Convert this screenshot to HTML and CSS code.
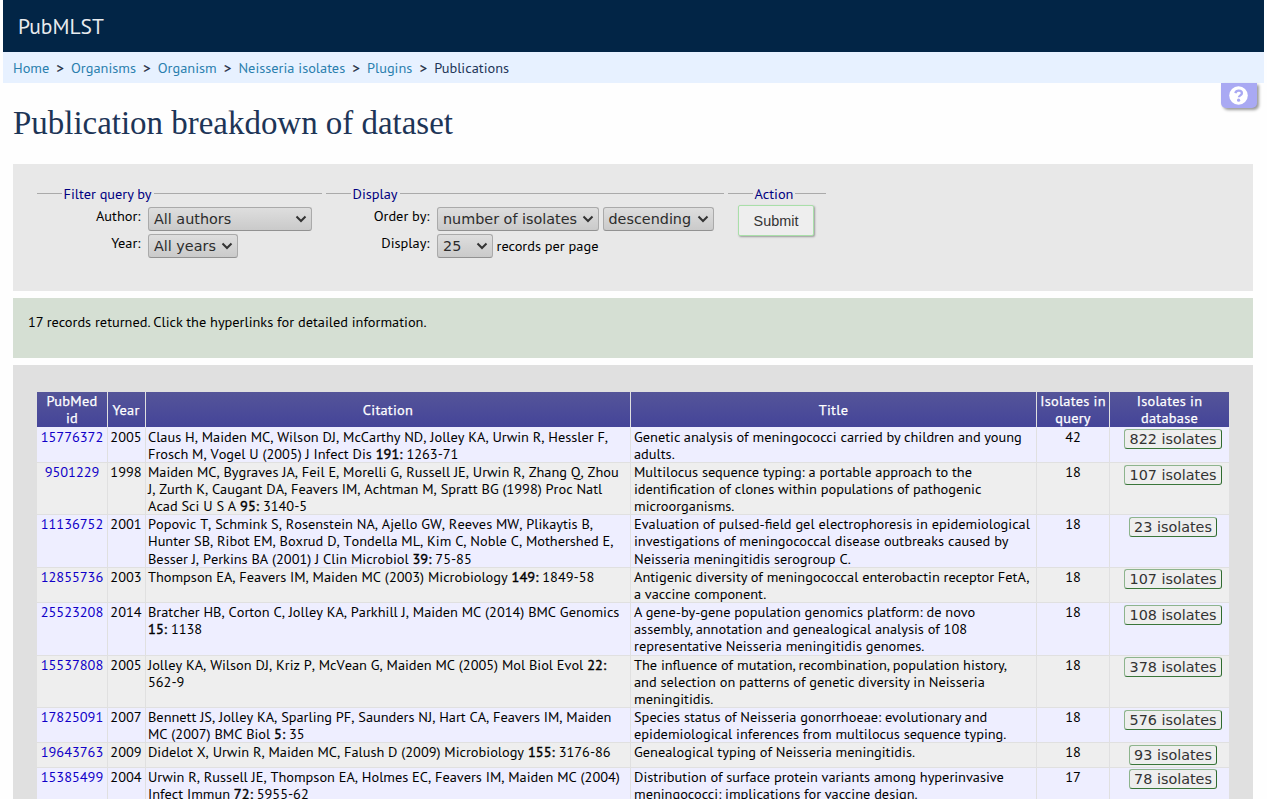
FILE: index.html
```html
<!DOCTYPE html>
<html lang="en">
<head>
<meta charset="utf-8">
<title>Publication breakdown of dataset</title>
<link rel="stylesheet" href="styles.css">
</head>
<body>
<header class="banner">PubMLST</header>
<nav class="crumbs"><a>Home</a><i>&gt;</i><a>Organisms</a><i>&gt;</i><a>Organism</a><i>&gt;</i><a>Neisseria isolates</a><i>&gt;</i><a>Plugins</a><i>&gt;</i><span>Publications</span>
<div class="help"><svg width="19" height="19" viewBox="0 0 19 19"><circle cx="9.5" cy="9.5" r="9.3" fill="#fff"/><path d="M6.3 7.1C6.8 5.4 8 4.6 9.700 4.600c1.900 0 3.200 1 3.200 2.600 0 2.200-3 2.100-3 4.100" fill="none" stroke="#a9a9f3" stroke-width="2.3"/><circle cx="9.6" cy="14.2" r="1.6" fill="#a9a9f3"/></svg></div>
</nav>
<h1>Publication breakdown of dataset</h1>
<main>
<section class="box form">
  <div class="fs f1"><div class="legend"><span>Filter query by</span></div>
    <div class="row"><label>Author:</label><div class="sel w164">All authors<svg viewBox="0 0 12 8"><path d="M1.500 1.500 6 6l4.500-4.500"/></svg></div></div>
    <div class="row"><label>Year:</label><div class="sel w90">All years<svg viewBox="0 0 12 8"><path d="M1.500 1.500 6 6l4.500-4.500"/></svg></div></div>
  </div>
  <div class="fs f2"><div class="legend"><span>Display</span></div>
    <div class="row"><label>Order by:</label><div class="sel w162">number of isolates<svg viewBox="0 0 12 8"><path d="M1.500 1.500 6 6l4.500-4.500"/></svg></div><div class="sel w111">descending<svg viewBox="0 0 12 8"><path d="M1.500 1.500 6 6l4.500-4.500"/></svg></div></div>
    <div class="row"><label>Display:</label><div class="sel w56">25<svg viewBox="0 0 12 8"><path d="M1.500 1.500 6 6l4.500-4.500"/></svg></div><span class="per">records per page</span></div>
  </div>
  <div class="fs f3"><div class="legend"><span>Action</span></div><button class="submit">Submit</button></div>
</section>
<section class="box note">17 records returned. Click the hyperlinks for detailed information.</section>
<section class="box results">
<table>
<colgroup><col class="k1"><col class="k2"><col class="k3"><col class="k4"><col class="k5"><col class="k6"></colgroup>
<thead><tr><th>PubMed<br>id</th><th>Year</th><th>Citation</th><th>Title</th><th>Isolates in<br>query</th><th>Isolates in<br>database</th></tr></thead>
<tbody>
<tr class="h35"><td><a>15776372</a></td><td>2005</td><td>Claus H, Maiden MC, Wilson DJ, McCarthy ND, Jolley KA, Urwin R, Hessler F,<br>Frosch M, Vogel U (2005) J Infect Dis <b>191:</b> 1263-71</td><td>Genetic analysis of meningococci carried by children and young<br>adults.</td><td>42</td><td><button>822 isolates</button></td></tr>
<tr class="h52 low"><td><a>9501229</a></td><td>1998</td><td>Maiden MC, Bygraves JA, Feil E, Morelli G, Russell JE, Urwin R, Zhang Q, Zhou<br>J, Zurth K, Caugant DA, Feavers IM, Achtman M, Spratt BG (1998) Proc Natl<br>Acad Sci U S A <b>95:</b> 3140-5</td><td>Multilocus sequence typing: a portable approach to the<br>identification of clones within populations of pathogenic<br>microorganisms.</td><td>18</td><td><button>107 isolates</button></td></tr>
<tr class="h53 low loose"><td><a>11136752</a></td><td>2001</td><td>Popovic T, Schmink S, Rosenstein NA, Ajello GW, Reeves MW, Plikaytis B,<br>Hunter SB, Ribot EM, Boxrud D, Tondella ML, Kim C, Noble C, Mothershed E,<br>Besser J, Perkins BA (2001) J Clin Microbiol <b>39:</b> 75-85</td><td>Evaluation of pulsed-field gel electrophoresis in epidemiological<br>investigations of meningococcal disease outbreaks caused by<br>Neisseria meningitidis serogroup C.</td><td>18</td><td><button>23 isolates</button></td></tr>
<tr class="h35"><td><a>12855736</a></td><td>2003</td><td>Thompson EA, Feavers IM, Maiden MC (2003) Microbiology <b>149:</b> 1849-58</td><td>Antigenic diversity of meningococcal enterobactin receptor FetA,<br>a vaccine component.</td><td>18</td><td><button>107 isolates</button></td></tr>
<tr class="h53 low"><td><a>25523208</a></td><td>2014</td><td>Bratcher HB, Corton C, Jolley KA, Parkhill J, Maiden MC (2014) BMC Genomics<br><b>15:</b> 1138</td><td>A gene-by-gene population genomics platform: de novo<br>assembly, annotation and genealogical analysis of 108<br>representative Neisseria meningitidis genomes.</td><td>18</td><td><button>108 isolates</button></td></tr>
<tr class="h52"><td><a>15537808</a></td><td>2005</td><td>Jolley KA, Wilson DJ, Kriz P, McVean G, Maiden MC (2005) Mol Biol Evol <b>22:</b><br>562-9</td><td>The influence of mutation, recombination, population history,<br>and selection on patterns of genetic diversity in Neisseria<br>meningitidis.</td><td>18</td><td><button>378 isolates</button></td></tr>
<tr class="h35 low"><td><a>17825091</a></td><td>2007</td><td>Bennett JS, Jolley KA, Sparling PF, Saunders NJ, Hart CA, Feavers IM, Maiden<br>MC (2007) BMC Biol <b>5:</b> 35</td><td>Species status of Neisseria gonorrhoeae: evolutionary and<br>epidemiological inferences from multilocus sequence typing.</td><td>18</td><td><button>576 isolates</button></td></tr>
<tr class="h25 low"><td><a>19643763</a></td><td>2009</td><td>Didelot X, Urwin R, Maiden MC, Falush D (2009) Microbiology <b>155:</b> 3176-86</td><td>Genealogical typing of Neisseria meningitidis.</td><td>18</td><td><button>93 isolates</button></td></tr>
<tr class="h35"><td><a>15385499</a></td><td>2004</td><td>Urwin R, Russell JE, Thompson EA, Holmes EC, Feavers IM, Maiden MC (2004)<br>Infect Immun <b>72:</b> 5955-62</td><td>Distribution of surface protein variants among hyperinvasive<br>meningococci: implications for vaccine design.</td><td>17</td><td><button>78 isolates</button></td></tr>
</tbody>
</table>
</section>
</main>
</body>
</html>
```
FILE: styles.css
```css
* { box-sizing: border-box; }
html { height: 799px; overflow: hidden; background: #fefefe; }
body { display: flex; flex-direction: column; margin: 0 3px; height: 799px; overflow: hidden; color: #000; font: 14.35px/17px "PT Sans", "Noto Sans", sans-serif; }
.banner { flex: none; height: 52px; padding-left: 15px; background: #022546; color: #e8ebee; font-size: 21.49px; line-height: 53px; }
.crumbs { flex: none; position: relative; display: flex; height: 31px; padding-left: 10px; background: #e7f1ff; color: #1d3557; line-height: 32px; white-space: nowrap; }
.crumbs a { color: #2a7fae; }
.crumbs i { width: 21.8px; text-align: center; font-style: normal; color: #1d2b40; -webkit-text-stroke: 0.3px; }
.help { position: absolute; right: 7px; top: 31px; width: 36px; height: 24.5px; border-radius: 0 0 5px 5px; background: #a9a9f3; box-shadow: 2px 2px 3px #999; }
.help svg { display: block; margin: 2.500px 0 0 8px; }
h1 { flex: none; height: 81px; margin: 0; padding-left: 10px; color: #1d3557; font: 400 32.95px/80px "Liberation Serif", serif; }
main { flex: 1; min-height: 0; display: flex; flex-direction: column; gap: 7px; width: 1240px; margin-left: 10px; }
.form { flex: none; display: flex; height: 127px; padding: 21px 24px 0; background: #e8e8e8; gap: 4px; }
.f1 { width: 285px; }
.f2 { width: 398px; }
.f3 { width: 98px; }
.legend { display: flex; align-items: center; height: 17px; margin-bottom: 3px; color: navy; white-space: nowrap; }
.legend::before { content: ""; width: 25px; height: 1px; margin: 0 1.500px 0 0; background: #aaa; }
.legend::after { content: ""; flex: 1; height: 1px; margin: 0 0 0 2px; background: #aaa; }
.row { display: flex; gap: 3.5px; height: 27px; }
label { width: 103.5px; margin-right: 4px; padding-top: 2px; text-align: right; }
.sel { display: flex; align-items: center; justify-content: space-between; height: 24px; margin-top: 2px; padding: 0 4px 0 5px; border: 1px solid #aaa; border-bottom-color: #929292; border-radius: 3px; background: linear-gradient(#dedede, #cacaca); color: #2c2c2c; font: 14.36px "DejaVu Sans", sans-serif; white-space: nowrap; }
.sel svg { width: 12px; height: 8px; flex: none; fill: none; stroke: #333; stroke-width: 2; }
.w164 { width: 164px; } .w90 { width: 90px; } .w162 { width: 162px; } .w111 { width: 111px; } .w56 { width: 56px; }
.per { padding-top: 5px; white-space: nowrap; }
.submit { display: block; width: 76px; height: 31px; margin: 2px 0 0 10px; border: 1px solid #a9dfa9; border-radius: 2px; background: #eee; color: #333; box-shadow: 1px 1px 2px #9a9a9a; font: 14.4px "Liberation Sans", sans-serif; }
.note { flex: none; height: 60px; padding: 15px 15px; background: #d5dfd3; }
.results { flex: 1; min-height: 0; overflow: hidden; padding: 27px 24px 0; background: #e0e0e0; }
table { width: 1193px; table-layout: fixed; border-spacing: 0; border-collapse: separate; }
.k1 { width: 71px; } .k2 { width: 38px; } .k3 { width: 485px; } .k4 { width: 406px; } .k5 { width: 73px; } .k6 { width: 120px; }
th, td { padding: 0; white-space: nowrap; border-right: 1px solid #e0e0e0; }
th { height: 35px; padding-bottom: 1px; background: linear-gradient(#555599, #444499); color: #fff; font-weight: 400; letter-spacing: 0.25px; -webkit-text-stroke: 0.25px; }
td { border-top: 1px solid #e0e0e0; vertical-align: top; text-align: center; }
tbody tr { background: #eee; }
tbody tr:nth-child(odd) { background: #eef; }
tbody tr:first-child td { border-top-color: #eef; }
td:nth-child(2), th:nth-child(2) { padding-right: 1px; }
td:nth-child(3) { padding-left: 2px; text-align: left; font-size: 14.33px; font-kerning: none; }
td:nth-child(4) { padding-left: 3px; text-align: left; }
td a { color: #1000c8; }
td b { font-weight: 400; letter-spacing: 0.1px; -webkit-text-stroke: 0.4px; }
.h35 { height: 35px; } .h52 { height: 52px; } .h53 { height: 53px; } .h25 { height: 25px; }
.loose td { line-height: 17.3px; }
td > button { display: block; height: 20px; margin: 1px auto 0; padding: 0 4.500px; position: relative; left: 3.5px; border: 1px solid #8db48d; border-right-color: #2f6b2f; border-bottom-color: #3a763a; border-radius: 3px; background: #eee; color: #333; font: 14.36px/17px "DejaVu Sans", sans-serif; }
.low button { margin-top: 2px; }
```
